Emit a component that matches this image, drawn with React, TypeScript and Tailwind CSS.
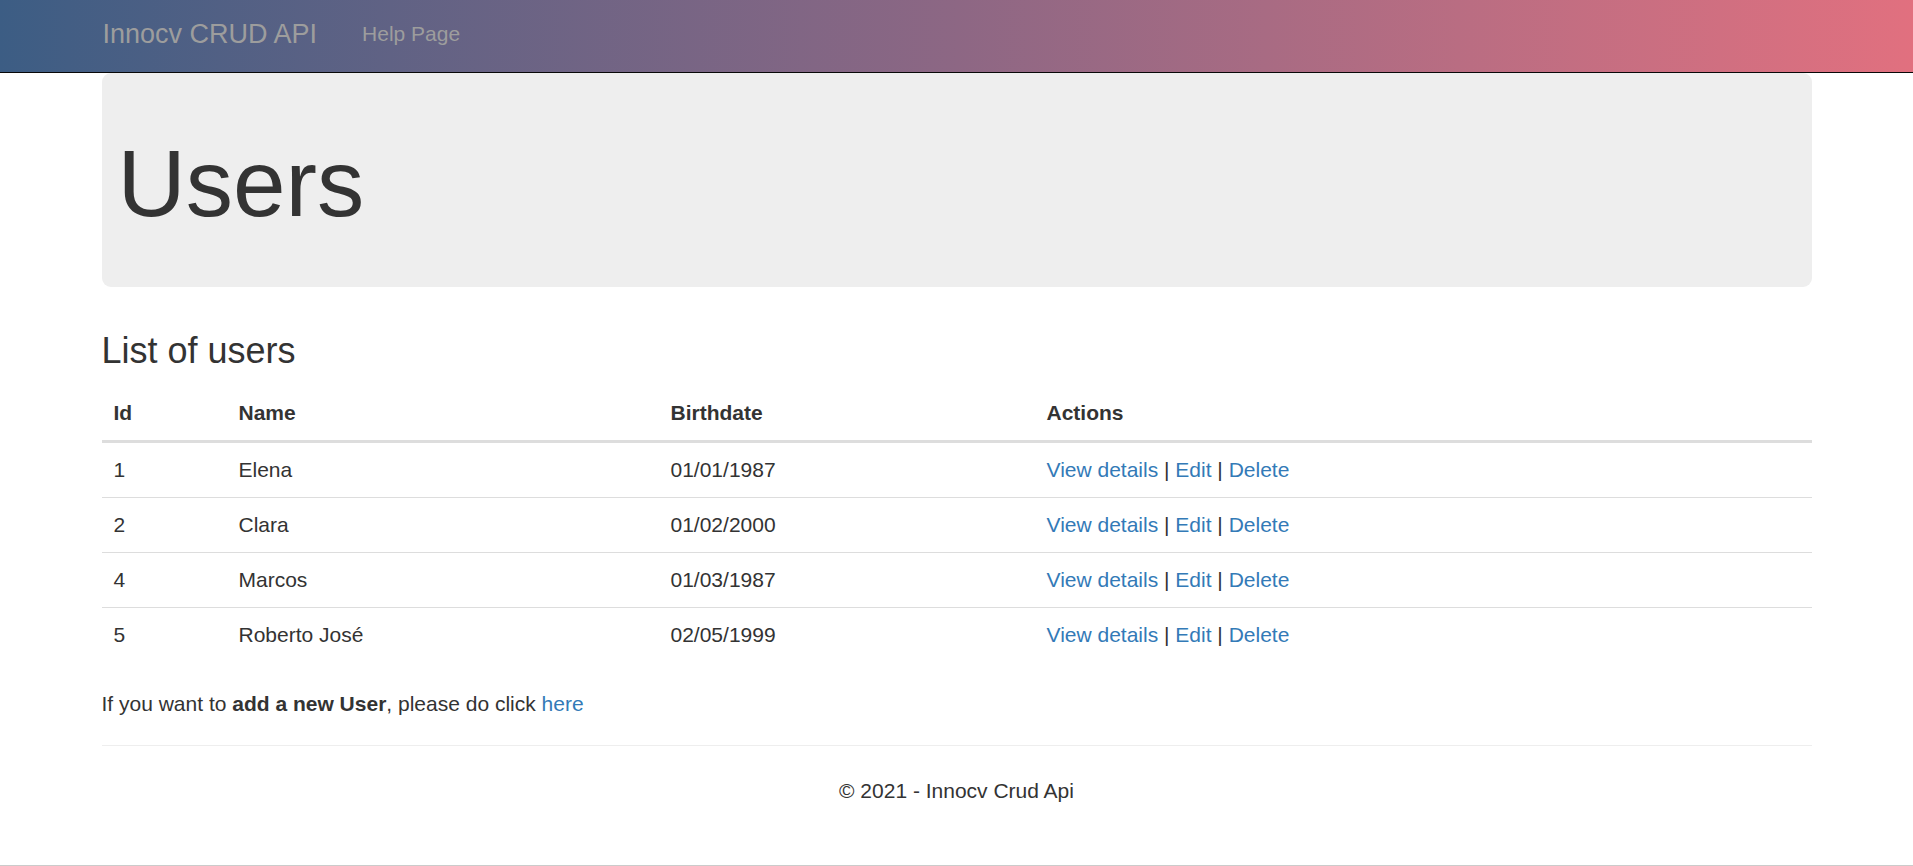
import React from "react";

const users = [
  { id: 1, name: "Elena", birth: "01/01/1987" },
  { id: 2, name: "Clara", birth: "01/02/2000" },
  { id: 4, name: "Marcos", birth: "01/03/1987" },
  { id: 5, name: "Roberto José", birth: "02/05/1999" },
];

export default function App() {
  return (
    <div
      className="h-[866px] overflow-hidden border-b border-[#cbcbcb] bg-white text-[#333333] text-[21px] leading-[30px]"
      style={{ fontFamily: '"Liberation Sans", Arial, Helvetica, sans-serif' }}
    >
      <nav className="h-[73px] border-b border-[#080808] bg-gradient-to-r from-[#3c5d84] via-[#8d6784] to-[#e1707f]">
        <div className="mx-auto flex w-[1710px] items-start gap-[45px] pt-[19px] pl-[1px]">
          <a className="text-[27px] leading-[30px] text-[#9d9d9d]">Innocv CRUD API</a>
          <a className="text-[21px] leading-[30px] text-[#9d9d9d]">Help Page</a>
        </div>
      </nav>

      <div className="mx-auto w-[1710px]">
        <div className="rounded-[9px] bg-[#eeeeee] px-[16px] pt-[58px] pb-[52px]">
          <h1 className="text-[94.5px] leading-[104px] font-normal text-[#333333]">Users</h1>
        </div>

        <h3 className="mt-[44px] mb-[15px] text-[36px] leading-[39.6px] font-normal">List of users</h3>

        <table className="w-full border-collapse">
          <thead>
            <tr className="border-b-[3px] border-[#dddddd] text-left">
              <th className="w-[125px] px-[12px] py-[12px] font-bold">Id</th>
              <th className="w-[432px] px-[12px] py-[12px] font-bold">Name</th>
              <th className="w-[376px] px-[12px] py-[12px] font-bold">Birthdate</th>
              <th className="px-[12px] py-[12px] font-bold">Actions</th>
            </tr>
          </thead>
          <tbody>
            {users.map((u, i) => (
              <tr key={u.id} className={i > 0 ? "border-t border-[#dddddd]" : ""}>
                <td className="px-[12px] py-[12px]">{u.id}</td>
                <td className="px-[12px] py-[12px]">{u.name}</td>
                <td className="px-[12px] py-[12px]">{u.birth}</td>
                <td className="px-[12px] py-[12px]">
                  <a className="text-[#337ab7]">View details</a> | <a className="text-[#337ab7]">Edit</a> |{" "}
                  <a className="text-[#337ab7]">Delete</a>
                </td>
              </tr>
            ))}
          </tbody>
        </table>

        <p className="mt-[27px]">
          If you want to <b className="font-bold">add a new User</b>, please do click{" "}
          <a className="text-[#337ab7]">here</a>
        </p>

        <hr className="mt-[26px] border-0 border-t border-[#eeeeee]" />

        <footer className="pt-[30px] text-center">
          <p>© 2021 - Innocv Crud Api</p>
        </footer>
      </div>
    </div>
  );
}
